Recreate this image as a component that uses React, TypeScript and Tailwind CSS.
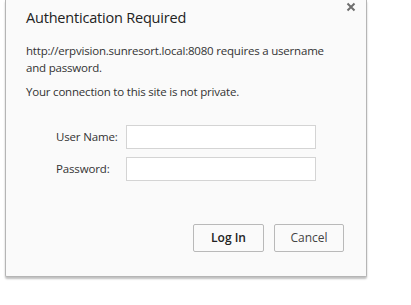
const App = () => {
  return (
    <div className="h-[305px] w-[411px] bg-white" style={{ fontFamily: '"Open Sans", "Noto Sans", sans-serif' }}>
      <div className="relative ml-[5px] w-[362px] h-[277px] bg-[#fafafa] border-x border-b border-[#b5b5b5] rounded-b-[2px] shadow-[0_2px_2px_rgba(0,0,0,0.25)] text-[#333]">
        <button className="absolute right-[10px] top-[2px] text-[#777]">
          <svg width="10" height="10" viewBox="0 0 10 10">
            <path d="M1.5 1.5 L8.5 8.5 M8.5 1.5 L1.5 8.5" stroke="#6e6e6e" strokeWidth="2" />
          </svg>
        </button>
        <div className="pl-[20px] pt-[8px] pr-8">
          <h1 className="text-[14.5px] leading-5 tracking-[-0.2px] text-[#222]">Authentication Required</h1>
          <p className="mt-[14px] text-[11.5px] leading-[17px] tracking-[-0.2px]">
            http://erpvision.sunresort.local:8080 requires a username and password.
          </p>
          <p className="mt-[7px] text-[11.5px] leading-[17px] tracking-[-0.2px]">Your connection to this site is not private.</p>
        </div>
        <div className="mt-[25px] flex flex-col gap-[8px]">
          <div className="flex items-center">
            <label className="w-[120px] pl-[50px] text-[11.5px] tracking-[-0.15px]">User Name:</label>
            <input className="h-[24px] w-[190px] bg-white border border-[#d4d4d4] outline-none" />
          </div>
          <div className="flex items-center">
            <label className="w-[120px] pl-[50px] text-[11.5px] tracking-[-0.15px]">Password:</label>
            <input type="password" className="h-[24px] w-[190px] bg-white border border-[#d4d4d4] outline-none" />
          </div>
        </div>
        <div className="mt-[43px] flex justify-end gap-[10px] pr-[22px]">
          <button className="h-[28px] w-[71px] rounded-[2px] border border-[#b9b9b9] bg-[#fafafa] text-[12px] font-semibold text-[#222]">
            Log In
          </button>
          <button className="h-[28px] w-[70px] rounded-[2px] border border-[#b9b9b9] bg-[#fafafa] text-[12px] text-[#444]">
            Cancel
          </button>
        </div>
      </div>
    </div>
  );
};

export default App;
